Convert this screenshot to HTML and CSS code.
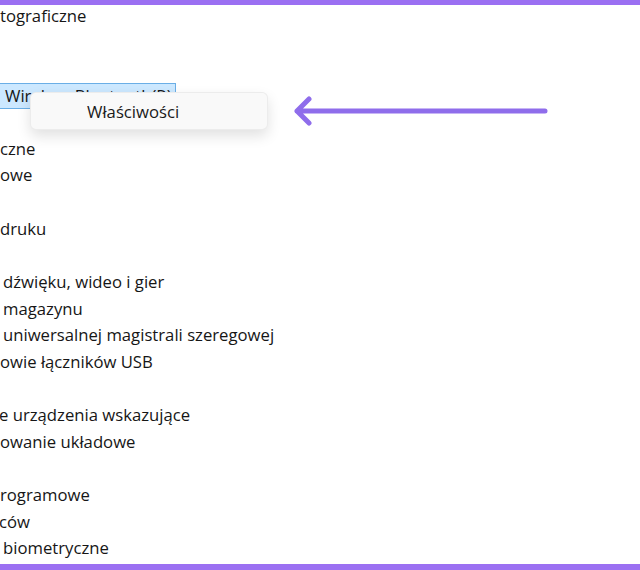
FILE: index.html
```html
<!DOCTYPE html>
<html lang="pl">
<head>
<meta charset="utf-8">
<title>Menedżer urządzeń</title>
<link rel="stylesheet" href="styles.css">
</head>
<body>
<div class="frame">
  <ul class="tree">
    <li class="row">tograficzne</li>
    <li class="row"></li>
    <li class="row"></li>
    <li class="row"><span class="sel">Wireless Bluetooth(R)</span></li>
    <li class="row"></li>
    <li class="row">czne</li>
    <li class="row">owe</li>
    <li class="row"></li>
    <li class="row">druku</li>
    <li class="row"></li>
    <li class="row in3">dźwięku, wideo i gier</li>
    <li class="row in3">magazynu</li>
    <li class="row in3">uniwersalnej magistrali szeregowej</li>
    <li class="row">owie łączników USB</li>
    <li class="row"></li>
    <li class="row cut1">e urządzenia wskazujące</li>
    <li class="row">owanie układowe</li>
    <li class="row"></li>
    <li class="row">rogramowe</li>
    <li class="row cut1">ców</li>
    <li class="row in3">biometryczne</li>
  </ul>
</div>

<div class="menu">
  <div class="menu-item">Właściwości</div>
</div>

<svg class="arrow" width="262" height="36" viewBox="0 0 262 36" aria-hidden="true">
  <path d="M255 18 H7 M19 6 L7 18 L19 30" fill="none" stroke="#8f6deb" stroke-width="5" stroke-linecap="round" stroke-linejoin="round"/>
</svg>
</body>
</html>
```

FILE: styles.css
```css
html, body {
  margin: 0;
  padding: 0;
  background: #ffffff;
}

body {
  width: 640px;
  height: 570px;
  overflow: hidden;
  position: relative;
  font-family: "Open Sans", "Noto Sans", "DejaVu Sans", sans-serif;
  color: #161616;
}

.frame {
  box-sizing: border-box;
  height: 570px;
  border-top: 5px solid #9b70f2;
  border-bottom: 6px solid #9b70f2;
  overflow: hidden;
}

.tree {
  list-style: none;
  margin: -2.4px 0 0 0;
  padding: 0;
}

.row {
  height: 26.65px;
  line-height: 26.65px;
  font-size: 16.7px;
  white-space: nowrap;
  padding-left: 0;
}

.in3 {
  padding-left: 3px;
}

.cut1 {
  margin-left: -1px;
}

.sel {
  display: inline-block;
  box-sizing: border-box;
  height: 26px;
  line-height: 24px;
  width: 178px;
  margin-left: -2px;
  padding-left: 6px;
  background: #cce8ff;
  border: 1px solid #6aaee6;
  vertical-align: top;
  overflow: hidden;
}

.menu {
  position: absolute;
  left: 30px;
  top: 92px;
  width: 238px;
  height: 38px;
  box-sizing: border-box;
  background: #f9f9f9;
  border: 1px solid rgba(0, 0, 0, 0.05);
  border-radius: 6px;
  box-shadow: 0 6px 14px rgba(0, 0, 0, 0.12);
  display: flex;
  align-items: center;
}

.menu-item {
  padding-left: 56px;
  font-size: 16.7px;
  color: #1a1a1a;
}

.arrow {
  position: absolute;
  left: 290px;
  top: 93px;
}
```
